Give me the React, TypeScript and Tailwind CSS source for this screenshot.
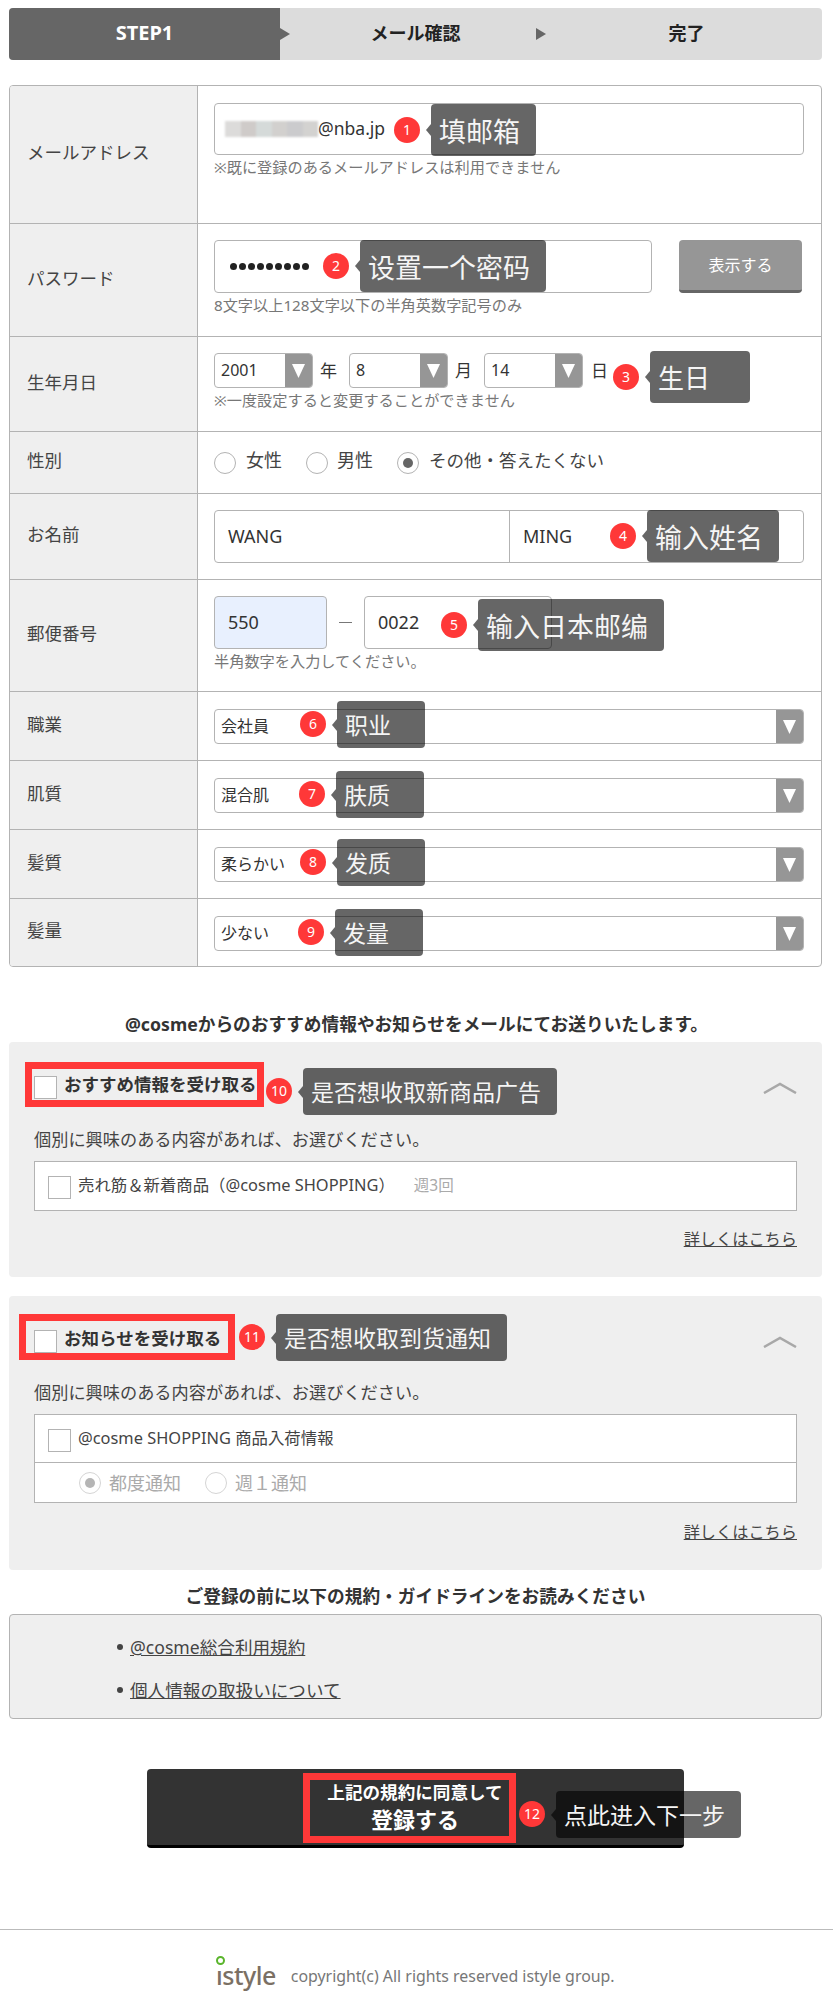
import type { ReactNode } from "react";

function Badge({ n, className }: { n: number; className: string }) {
  return (
    <span className={`absolute flex h-[26px] w-[26px] items-center justify-center rounded-full bg-[#ff3838] text-[14px] leading-none text-white ${className}`}>
      {n}
    </span>
  );
}

function Tip({ text, className }: { text: string; className: string }) {
  return (
    <div className={`absolute flex items-center rounded-[4px] bg-black/60 pl-[8px] leading-none whitespace-nowrap text-[#f5f5f5] [font-family:'Noto_Sans_CJK_SC',sans-serif] ${className}`}>
      <span className="absolute top-1/2 left-[-5px] -mt-[6px] h-0 w-0 border-y-[6px] border-r-[5px] border-y-transparent border-r-black/60" />
      {text}
    </div>
  );
}

function RedBox({ className }: { className: string }) {
  return <div className={`pointer-events-none absolute border-[7px] border-[#ff3838] ${className}`} />;
}

function Row({ label, h, children }: { label: string; h: string; children: ReactNode }) {
  return (
    <div className={`flex border-b border-[#b3b3b3] last:border-b-0 ${h}`}>
      <div className="flex w-[188px] shrink-0 items-center border-r border-[#b3b3b3] bg-[#efefef] pb-[4px] pl-[17px] text-[17.5px] text-[#444]">
        {label}
      </div>
      <div className="min-w-0 flex-1 pr-[17px] pl-[16px]">{children}</div>
    </div>
  );
}

function Help({ children }: { children: ReactNode }) {
  return <p className="mt-[2px] text-[15.2px] leading-[20px] whitespace-nowrap text-[#777]">{children}</p>;
}

function Arrow() {
  return (
    <span className="flex h-full w-[27px] shrink-0 items-center justify-center bg-[#969696]">
      <svg width="13" height="14" viewBox="0 0 13 14">
        <polygon points="0,0 13,0 6.5,14" fill="#fff" />
      </svg>
    </span>
  );
}

function Select({ value, className }: { value: string; className: string }) {
  return (
    <div className={`flex h-[35px] items-center overflow-hidden rounded-[4px] border border-[#b3b3b3] bg-white text-[16px] text-[#333] ${className}`}>
      <span className="flex-1 pb-[2px] pl-[6px]">{value}</span>
      <Arrow />
    </div>
  );
}

function FullSelect({ label, value, h }: { label: string; value: string; h: string }) {
  return (
    <Row label={label} h={h}>
      <div className="pt-[17px]">
        <Select value={value} className="w-full" />
      </div>
    </Row>
  );
}

function Radio({ checked, muted }: { checked?: boolean; muted?: boolean }) {
  return (
    <span className={`flex h-[22px] w-[22px] shrink-0 items-center justify-center rounded-full border bg-white ${muted ? "border-[#d5d5d5]" : "border-[#b3b3b3]"}`}>
      {checked && <span className={`h-[10px] w-[10px] rounded-full ${muted ? "bg-[#b5b5b5]" : "bg-[#666]"}`} />}
    </span>
  );
}

function Checkbox({ className = "" }: { className?: string }) {
  return <span className={`block h-[23px] w-[23px] shrink-0 border border-[#b3b3b3] bg-white ${className}`} />;
}

function Chevron() {
  return (
    <svg className="ml-auto" width="34" height="12" viewBox="0 0 34 12" fill="none">
      <polyline points="1,11 17,2 33,11" stroke="#a8a8a8" strokeWidth="2.5" />
    </svg>
  );
}

function DetailLink() {
  return <a className="text-[16.2px] leading-[24px] text-[#444] underline">詳しくはこちら</a>;
}

export default function App() {
  return (
    <div className="relative h-[2012px] w-[833px] overflow-hidden bg-white text-[#333] [font-family:'Noto_Sans','Noto_Sans_CJK_JP',sans-serif]">
      <div className="mt-[8px] ml-[9px] flex h-[52px] w-[813px] overflow-hidden rounded-[4px] bg-[#dcdcdc] text-[18px] font-bold">
        <div className="relative flex w-[271px] items-center justify-center bg-[#666] pb-[2px] text-[20px] text-white">STEP1</div>
        <div className="relative flex w-[271px] items-center justify-center pb-[2px] text-[#222]">
          <span className="absolute top-[20px] left-0 h-0 w-0 border-y-[6px] border-l-[10px] border-y-transparent border-l-[#666]" />
          メール確認
          <span className="absolute top-[20px] right-[5px] h-0 w-0 border-y-[6px] border-l-[10px] border-y-transparent border-l-[#666]" />
        </div>
        <div className="flex flex-1 items-center justify-center pb-[2px] text-[#222]">完了</div>
      </div>

      <div className="mt-[25px] ml-[9px] w-[813px] overflow-hidden rounded-[4px] border border-[#b3b3b3]">
        <Row label="メールアドレス" h="h-[138px]">
          <div className="pt-[17px]">
            <div className="flex h-[52px] items-center rounded-[4px] border border-[#b3b3b3] pl-[10px] text-[17.5px]">
              <span className="flex h-[16px] w-[93px] blur-[1px]">
                <span className="flex-1 bg-[#dcdbda]" />
                <span className="flex-1 bg-[#cfcbc9]" />
                <span className="flex-1 bg-[#d5dad9]" />
                <span className="flex-1 bg-[#d2d0ce]" />
                <span className="flex-1 bg-[#cbcbcd]" />
                <span className="flex-1 bg-[#d3d2d0]" />
              </span>
              <span className="pb-[2px]">@nba.jp</span>
            </div>
            <Help>※既に登録のあるメールアドレスは利用できません</Help>
          </div>
        </Row>

        <Row label="パスワード" h="h-[113px]">
          <div className="pt-[16px]">
            <div className="flex items-start justify-between">
              <div className="flex h-[53px] w-[438px] items-center gap-[2px] rounded-[4px] border border-[#b3b3b3] pl-[15px]">
                {[0, 1, 2, 3, 4, 5, 6, 7, 8].map((d) => (
                  <span key={d} className="h-[7px] w-[7px] rounded-full bg-[#222]" />
                ))}
              </div>
              <button className="mr-[2px] h-[53px] w-[123px] rounded-[4px] border-b-[3px] border-[#666] bg-[#969696] text-[16px] text-white">
                表示する
              </button>
            </div>
            <Help>8文字以上128文字以下の半角英数字記号のみ</Help>
          </div>
        </Row>

        <Row label="生年月日" h="h-[95px]">
          <div className="pt-[16px]">
            <div className="flex items-center text-[17px]">
              <Select value="2001" className="w-[99px]" />
              <span className="ml-[7px] w-[29px]">年</span>
              <Select value="8" className="w-[99px]" />
              <span className="ml-[7px] w-[29px]">月</span>
              <Select value="14" className="w-[99px]" />
              <span className="ml-[8px]">日</span>
            </div>
            <Help>※一度設定すると変更することができません</Help>
          </div>
        </Row>

        <Row label="性別" h="h-[62px]">
          <div className="flex h-full items-center text-[#444]">
            <Radio />
            <span className="ml-[10px] w-[60px] pb-[4px] text-[18px]">女性</span>
            <Radio />
            <span className="ml-[9px] w-[60px] pb-[4px] text-[18px]">男性</span>
            <Radio checked />
            <span className="ml-[10px] pb-[4px] text-[17.5px]">その他・答えたくない</span>
          </div>
        </Row>

        <Row label="お名前" h="h-[86px]">
          <div className="pt-[16px]">
            <div className="flex h-[53px] items-center rounded-[4px] border border-[#b3b3b3] text-[18px]">
              <span className="flex h-full w-[295px] items-center border-r border-[#b3b3b3] pl-[13px]">WANG</span>
              <span className="pl-[13px]">MING</span>
            </div>
          </div>
        </Row>

        <Row label="郵便番号" h="h-[112px]">
          <div className="pt-[16px]">
            <div className="flex items-center text-[18px]">
              <span className="flex h-[53px] w-[113px] items-center rounded-[4px] border border-[#b3b3b3] bg-[#e8f0fe] pl-[13px]">550</span>
              <span className="mx-[12px] h-px w-[13px] bg-[#777]" />
              <span className="flex h-[53px] w-[188px] items-center rounded-[4px] border border-[#b3b3b3] pl-[13px]">0022</span>
            </div>
            <Help>半角数字を入力してください。</Help>
          </div>
        </Row>

        <FullSelect label="職業" value="会社員" h="h-[69px]" />
        <FullSelect label="肌質" value="混合肌" h="h-[69px]" />
        <FullSelect label="髪質" value="柔らかい" h="h-[69px]" />
        <FullSelect label="髪量" value="少ない" h="h-[67px]" />
      </div>

      <h2 className="mt-[45px] ml-[9px] w-[815px] text-center text-[17.7px] leading-[24px] font-bold text-[#333]">
        @cosmeからのおすすめ情報やお知らせをメールにてお送りいたします。
      </h2>

      <section className="mt-[6px] ml-[9px] h-[235px] w-[813px] rounded-[4px] bg-[#efefef] px-[25px] pt-[34px]">
        <div className="flex h-[23px] items-center gap-[7px]">
          <Checkbox />
          <span className="mb-[6px] text-[17.5px] leading-[17px] font-bold">おすすめ情報を受け取る</span>
          <Chevron />
        </div>
        <p className="mt-[29px] text-[17.2px] leading-[24px] text-[#444]">個別に興味のある内容があれば、お選びください。</p>
        <div className="mt-[9px] flex h-[50px] items-start gap-[7px] border border-[#b3b3b3] bg-white pt-[13px] pl-[13px] text-[16.4px] leading-[20px] text-[#444]">
          <Checkbox className="mt-[1px]" />
          <span>売れ筋＆新着商品（@cosme SHOPPING）</span>
          <span className="ml-[12px] text-[15.5px] text-[#aaa]">週3回</span>
        </div>
        <div className="mt-[16px] text-right">
          <DetailLink />
        </div>
      </section>

      <section className="mt-[19px] ml-[9px] h-[274px] w-[813px] rounded-[4px] bg-[#efefef] px-[25px] pt-[34px]">
        <div className="flex h-[23px] items-center gap-[7px]">
          <Checkbox />
          <span className="mb-[6px] text-[17.5px] leading-[17px] font-bold">お知らせを受け取る</span>
          <Chevron />
        </div>
        <p className="mt-[28px] text-[17.2px] leading-[24px] text-[#444]">個別に興味のある内容があれば、お選びください。</p>
        <div className="mt-[9px] h-[89px] border border-[#b3b3b3] bg-white text-[16.4px] leading-[20px] text-[#444]">
          <div className="flex h-[48px] items-start gap-[7px] border-b border-[#b3b3b3] pt-[13px] pl-[13px]">
            <Checkbox className="mt-[1px]" />
            <span>@cosme SHOPPING 商品入荷情報</span>
          </div>
          <div className="flex h-[39px] items-center pl-[44px] text-[18px] text-[#aaa]">
            <Radio checked muted />
            <span className="ml-[8px] w-[96px]">都度通知</span>
            <Radio muted />
            <span className="ml-[8px]">週１通知</span>
          </div>
        </div>
        <div className="mt-[17px] text-right">
          <DetailLink />
        </div>
      </section>

      <h2 className="mt-[14px] ml-[9px] w-[813px] text-center text-[17.7px] leading-[24px] font-bold text-[#333]">
        ご登録の前に以下の規約・ガイドラインをお読みください
      </h2>

      <ul className="mt-[6px] ml-[9px] h-[105px] w-[813px] rounded-[4px] border border-[#b3b3b3] bg-[#efefef] pt-[20px] pl-[107px] text-[17.6px] leading-[24px] text-[#444]">
        <li className="flex items-center gap-[7px]">
          <span className="h-[6px] w-[6px] rounded-full bg-[#444]" />
          <a className="underline">@cosme総合利用規約</a>
        </li>
        <li className="mt-[19px] flex items-center gap-[7px]">
          <span className="h-[6px] w-[6px] rounded-full bg-[#444]" />
          <a className="underline">個人情報の取扱いについて</a>
        </li>
      </ul>

      <button className="mt-[50px] ml-[147px] flex h-[79px] w-[537px] flex-col items-center rounded-[4px] border-b-[3px] border-black bg-[#333] pt-[10px] pr-[1px] font-bold text-white">
        <span className="text-[17.6px] leading-[26px]">上記の規約に同意して</span>
        <span className="text-[22px] leading-[28px]">登録する</span>
      </button>

      <footer className="mt-[81px] flex items-center gap-[15px] border-t border-[#bbb] pt-[29px] pl-[216px]">
        <span className="relative text-[25px] leading-[32px] font-medium tracking-[-0.5px] text-[#7b7064]">
          <span className="absolute top-[-3px] left-[0px] h-[9px] w-[9px] rounded-full border-2 border-[#5ab52c]" />
          ıstyle
        </span>
        <span className="mt-[3px] text-[15.9px] whitespace-nowrap text-[#777]">copyright(c) All rights reserved istyle group.</span>
      </footer>

      <Badge n={1} className="top-[117px] left-[394px]" />
      <Tip text="填邮箱" className="top-[104px] left-[431px] h-[52px] w-[105px] text-[27px]" />
      <Badge n={2} className="top-[253px] left-[323px]" />
      <Tip text="设置一个密码" className="top-[240px] left-[360px] h-[52px] w-[186px] text-[27px]" />
      <Badge n={3} className="top-[364px] left-[613px]" />
      <Tip text="生日" className="top-[351px] left-[650px] h-[52px] w-[100px] text-[26px]" />
      <Badge n={4} className="top-[523px] left-[610px]" />
      <Tip text="输入姓名" className="top-[510px] left-[647px] h-[52px] w-[132px] text-[27px]" />
      <Badge n={5} className="top-[612px] left-[441px]" />
      <Tip text="输入日本邮编" className="top-[599px] left-[478px] h-[52px] w-[186px] text-[27px]" />
      <Badge n={6} className="top-[711px] left-[300px]" />
      <Tip text="职业" className="top-[701px] left-[337px] h-[47px] w-[88px] text-[23px]" />
      <Badge n={7} className="top-[781px] left-[299px]" />
      <Tip text="肤质" className="top-[771px] left-[336px] h-[47px] w-[88px] text-[23px]" />
      <Badge n={8} className="top-[849px] left-[300px]" />
      <Tip text="发质" className="top-[839px] left-[337px] h-[47px] w-[88px] text-[23px]" />
      <Badge n={9} className="top-[919px] left-[298px]" />
      <Tip text="发量" className="top-[909px] left-[335px] h-[47px] w-[88px] text-[23px]" />

      <RedBox className="top-[1062px] left-[25px] h-[45px] w-[239px]" />
      <Badge n={10} className="top-[1078px] left-[266px]" />
      <Tip text="是否想收取新商品广告" className="top-[1068px] left-[303px] h-[47px] w-[254px] text-[23px]" />
      <RedBox className="top-[1314px] left-[19px] h-[46px] w-[216px]" />
      <Badge n={11} className="top-[1324px] left-[239px]" />
      <Tip text="是否想收取到货通知" className="top-[1314px] left-[276px] h-[47px] w-[231px] text-[23px]" />
      <RedBox className="top-[1773px] left-[303px] h-[70px] w-[213px]" />
      <Badge n={12} className="top-[1801px] left-[519px]" />
      <Tip text="点此进入下一步" className="top-[1791px] left-[556px] h-[47px] w-[185px] text-[23px]" />
    </div>
  );
}
